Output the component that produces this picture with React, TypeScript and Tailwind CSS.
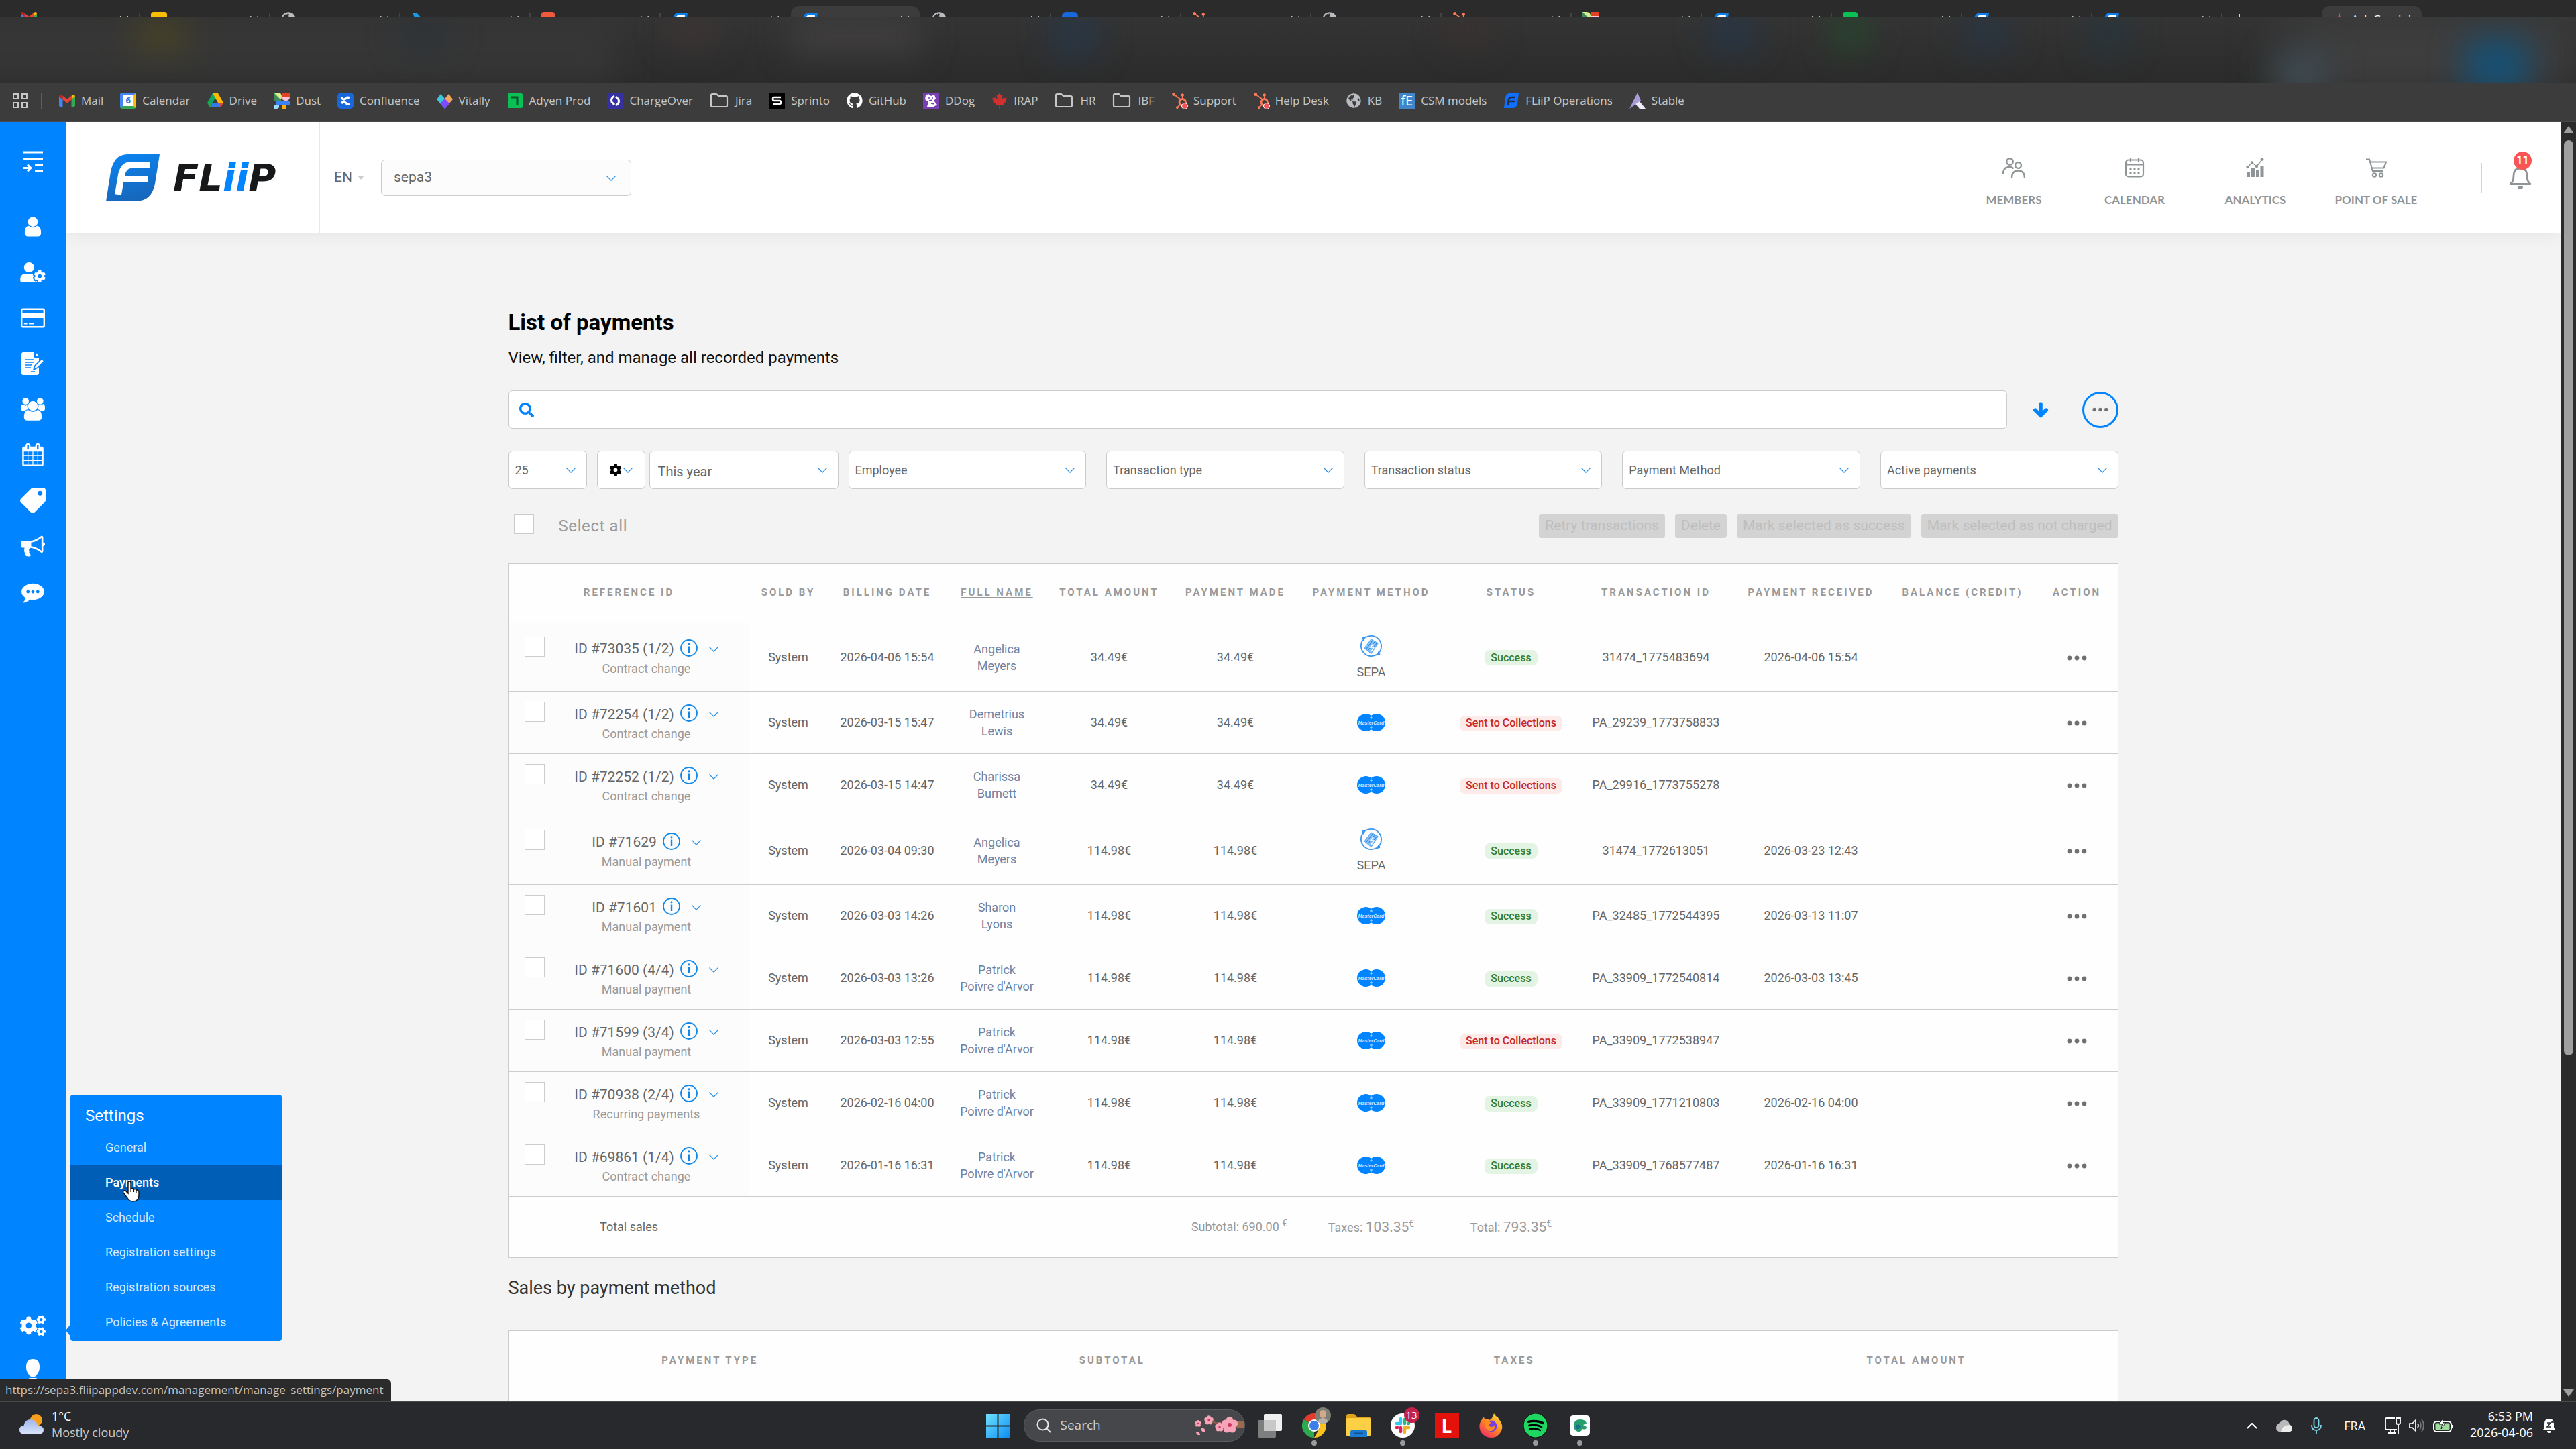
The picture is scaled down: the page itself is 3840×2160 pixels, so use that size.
import type { ReactNode } from "react"
import {
  FaArrowDown,
  FaCanadianMapleLeaf,
  FaCog,
  FaCogs,
  FaGithub,
  FaGlobeAmericas,
  FaHubspot,
  FaSearch,
  FaSpotify,
  FaTag,
  FaUserCog,
} from "react-icons/fa"

interface Payment {
  id: string
  kind: string
  date: string
  name: [string, string]
  amount: string
  method: "sepa" | "mastercard"
  success: boolean
  transaction: string
  received: string
}

const payments: Payment[] = [
  { id: "#73035 (1/2)", kind: "Contract change", date: "2026-04-06 15:54", name: ["Angelica", "Meyers"], amount: "34.49€", method: "sepa", success: true, transaction: "31474_1775483694", received: "2026-04-06 15:54" },
  { id: "#72254 (1/2)", kind: "Contract change", date: "2026-03-15 15:47", name: ["Demetrius", "Lewis"], amount: "34.49€", method: "mastercard", success: false, transaction: "PA_29239_1773758833", received: "" },
  { id: "#72252 (1/2)", kind: "Contract change", date: "2026-03-15 14:47", name: ["Charissa", "Burnett"], amount: "34.49€", method: "mastercard", success: false, transaction: "PA_29916_1773755278", received: "" },
  { id: "#71629", kind: "Manual payment", date: "2026-03-04 09:30", name: ["Angelica", "Meyers"], amount: "114.98€", method: "sepa", success: true, transaction: "31474_1772613051", received: "2026-03-23 12:43" },
  { id: "#71601", kind: "Manual payment", date: "2026-03-03 14:26", name: ["Sharon", "Lyons"], amount: "114.98€", method: "mastercard", success: true, transaction: "PA_32485_1772544395", received: "2026-03-13 11:07" },
  { id: "#71600 (4/4)", kind: "Manual payment", date: "2026-03-03 13:26", name: ["Patrick", "Poivre d'Arvor"], amount: "114.98€", method: "mastercard", success: true, transaction: "PA_33909_1772540814", received: "2026-03-03 13:45" },
  { id: "#71599 (3/4)", kind: "Manual payment", date: "2026-03-03 12:55", name: ["Patrick", "Poivre d'Arvor"], amount: "114.98€", method: "mastercard", success: false, transaction: "PA_33909_1772538947", received: "" },
  { id: "#70938 (2/4)", kind: "Recurring payments", date: "2026-02-16 04:00", name: ["Patrick", "Poivre d'Arvor"], amount: "114.98€", method: "mastercard", success: true, transaction: "PA_33909_1771210803", received: "2026-02-16 04:00" },
  { id: "#69861 (1/4)", kind: "Contract change", date: "2026-01-16 16:31", name: ["Patrick", "Poivre d'Arvor"], amount: "114.98€", method: "mastercard", success: true, transaction: "PA_33909_1768577487", received: "2026-01-16 16:31" },
]

const columns = [
  { label: "Reference ID", width: "w-[358px]" },
  { label: "Sold by", width: "w-[117px]" },
  { label: "Billing date", width: "w-[178px]" },
  { label: "Full name", width: "w-[149px]" },
  { label: "Total amount", width: "w-[186px]" },
  { label: "Payment made", width: "w-[190px]" },
  { label: "Payment method", width: "w-[215px]" },
  { label: "Status", width: "w-[202px]" },
  { label: "Transaction ID", width: "w-[230px]" },
  { label: "Payment received", width: "w-[232px]" },
  { label: "Balance (credit)", width: "w-[220px]" },
  { label: "Action", width: "w-[121px]" },
]

const settingsLinks = ["General", "Payments", "Schedule", "Registration settings", "Registration sources", "Policies & Agreements"]

/* ---------- Icons ---------- */

function FliipMark({ className }: { className?: string }) {
  return (
    <svg className={className} viewBox="0 0 80 70">
      <defs>
        <linearGradient id="mark" x1="0" y1="0" x2="0.3" y2="1">
          <stop offset="0" stopColor="#0a86f5" />
          <stop offset="1" stopColor="#1668bd" />
        </linearGradient>
      </defs>
      <path d="M32 0H80L73 44Q68 70 44 70H0L7 26Q12 0 32 0Z" fill="url(#mark)" />
      <path d="M18 60L23 31Q26 16 38 16H66M22 37H62" fill="none" stroke="#fff" strokeWidth="10" />
    </svg>
  )
}

function Chevron({ className = "" }: { className?: string }) {
  return (
    <svg className={`h-2 w-3.5 text-[#2f93e6] ${className}`} viewBox="0 0 14 8" fill="none" stroke="currentColor" strokeWidth="1.2">
      <path d="M0.5 0.5L7 7.2L13.5 0.5" />
    </svg>
  )
}

function Dots({ className = "h-2 w-[30px]" }: { className?: string }) {
  return (
    <svg className={className} viewBox="0 0 30 8" fill="#707070">
      <circle cx="4" cy="4" r="3.4" />
      <circle cx="15" cy="4" r="3.4" />
      <circle cx="26" cy="4" r="3.4" />
    </svg>
  )
}

function InfoIcon() {
  return (
    <svg className="h-[26px] w-[26px]" viewBox="0 0 26 26" fill="none" stroke="#1088ea" strokeWidth="1.8">
      <circle cx="13" cy="13" r="12" />
      <path d="M13 10.5V20" strokeWidth="2.4" />
      <circle cx="13" cy="6.8" r="1.6" fill="#1088ea" stroke="none" />
    </svg>
  )
}

function SepaIcon() {
  return (
    <svg className="h-[34px] w-[34px]" viewBox="0 0 34 34" fill="none" stroke="#3a96ee" strokeWidth="1.8">
      <path d="M8 4.5A15.5 15.5 0 0 1 29.5 26M26 29.5A15.5 15.5 0 0 1 4.5 8" />
      <path d="M9 3.2L4 4.6L5.4 9.4ZM25 30.8L30 29.4L28.6 24.6Z" fill="#3a96ee" strokeWidth="1" />
      <path d="M7 20L17 7L27 13L17 28Z" fill="#8fc4f7" stroke="#5aa9f2" strokeWidth="1.2" />
      <path d="M10 21L19 9M13 23L22 11M16 25L25 13" stroke="#2b8ae6" strokeWidth="1.2" />
      <path d="M20 14L16 19H21L17 25" stroke="#fff" strokeWidth="1.6" />
    </svg>
  )
}

function MastercardIcon() {
  return (
    <svg className="h-[26px] w-[42px]" viewBox="0 0 42 26">
      <circle cx="13" cy="13" r="13" fill="#0084ff" />
      <circle cx="29" cy="13" r="13" fill="#0084ff" />
      <path d="M21 3.2V8M19 6H23M21 18V22.8M19 20H23" stroke="#bfe0ff" strokeWidth="1" />
      <text x="21" y="16" textAnchor="middle" fontFamily="Liberation Sans" fontWeight="700" fontStyle="italic" fontSize="7" fill="#d9edff">
        MasterCard
      </text>
    </svg>
  )
}

function Fa4({ d, width = 1792, className }: { d: string; width?: number; className: string }) {
  return (
    <svg className={className} viewBox={`0 0 ${width} 1792`} fill="currentColor">
      <path d={d} />
    </svg>
  )
}

const USER =
  "M1536 1399q0 109-62.5 187t-150.5 78h-854q-88 0-150.5-78t-62.5-187q0-85 8.5-160.5t31.5-152 58.5-131 94-89 134.5-34.5q131 128 313 128t313-128q76 0 134.5 34.5t94 89 58.5 131 31.5 152 8.5 160.5zm-256-887q0 159-112.5 271.5t-271.5 112.5-271.5-112.5-112.5-271.5 112.5-271.5 271.5-112.5 271.5 112.5 112.5 271.5z"
const CARD =
  "M1760 128q66 0 113 47t47 113v1216q0 66-47 113t-113 47h-1600q-66 0-113-47t-47-113v-1216q0-66 47-113t113-47h1600zm-1600 128q-13 0-22.5 9.5t-9.5 22.5v224h1664v-224q0-13-9.5-22.5t-22.5-9.5h-1600zm1600 1280q13 0 22.5-9.5t9.5-22.5v-608h-1664v608q0 13 9.5 22.5t22.5 9.5h1600zm-1504-128v-128h256v128h-256zm384 0v-128h384v128h-384z"
const GROUP =
  "M593 896q-162 5-265 128h-134q-82 0-138-40.5t-56-118.5q0-353 124-353 6 0 43.5 21t97.5 42.5 119 21.5q67 0 133-23-5 37-5 66 0 159 81 295zm1071 637q0 120-73 189.5t-194 69.5h-874q-121 0-194-69.5t-73-189.5q0-53 3.5-103.5t14-109 26.5-108.5 43-97.5 62-81 85.5-53.5 111.5-20q10 0 43 21.5t73 48 107 48 135 21.5 135-21.5 107-48 73-48 43-21.5q61 0 111.5 20t85.5 53.5 62 81 43 97.5 26.5 108.5 14 109 3.5 103.5zm-1024-1277q0 106-75 181t-181 75-181-75-75-181 75-181 181-75 181 75 75 181zm704 384q0 159-112.5 271.5t-271.5 112.5-271.5-112.5-112.5-271.5 112.5-271.5 271.5-112.5 271.5 112.5 112.5 271.5zm576 225q0 78-56 118.5t-138 40.5h-134q-103-123-265-128 81-136 81-295 0-29-5-66 66 23 133 23 59 0 119-21.5t97.5-42.5 43.5-21q124 0 124 353zm-128-609q0 106-75 181t-181 75-181-75-75-181 75-181 181-75 181 75 75 181z"
const CALENDAR =
  "M192 1664h288v-288h-288v288zm352 0h320v-288h-320v288zm-352-352h288v-320h-288v320zm352 0h320v-320h-320v320zm-352-384h288v-288h-288v288zm736 736h320v-288h-320v288zm-384-736h320v-288h-320v288zm768 736h288v-288h-288v288zm-384-352h320v-320h-320v320zm-352-864v-288q0-13-9.5-22.5t-22.5-9.5h-64q-13 0-22.5 9.5t-9.5 22.5v288q0 13 9.5 22.5t22.5 9.5h64q13 0 22.5-9.5t9.5-22.5zm736 864h288v-320h-288v320zm-384-384h320v-288h-320v288zm384 0h288v-288h-288v288zm32-480v-288q0-13-9.5-22.5t-22.5-9.5h-64q-13 0-22.5 9.5t-9.5 22.5v288q0 13 9.5 22.5t22.5 9.5h64q13 0 22.5-9.5t9.5-22.5zm384-64v1280q0 52-38 90t-90 38h-1408q-52 0-90-38t-38-90v-1280q0-52 38-90t90-38h128v-96q0-66 47-113t113-47h64q66 0 113 47t47 113v96h384v-96q0-66 47-113t113-47h64q66 0 113 47t47 113v96h128q52 0 90 38t38 90z"
const BULLHORN =
  "M1664 640q53 0 90.5 37.5t37.5 90.5-37.5 90.5-90.5 37.5v384q0 52-38 90t-90 38q-417-347-812-380-58 19-91 66t-31 100.5 40 92.5q-20 33-23 65.5t6 58 33.5 55 48 50 61.5 50.5q-29 58-111.5 83t-168.5 11.5-132-55.5q-7-23-29.5-87.5t-32-94.5-23-89-15-101 3.5-98.5 22-110.5h-122q-66 0-113-47t-47-113v-192q0-66 47-113t113-47h480q435 0 896-384 52 0 90 38t38 90v384zm-128 604v-954q-394 302-768 343v270q377 42 768 341z"
const COMMENT =
  "M640 896q0-53-37.5-90.5t-90.5-37.5-90.5 37.5-37.5 90.5 37.5 90.5 90.5 37.5 90.5-37.5 37.5-90.5zm384 0q0-53-37.5-90.5t-90.5-37.5-90.5 37.5-37.5 90.5 37.5 90.5 90.5 37.5 90.5-37.5 37.5-90.5zm384 0q0-53-37.5-90.5t-90.5-37.5-90.5 37.5-37.5 90.5 37.5 90.5 90.5 37.5 90.5-37.5 37.5-90.5zm384 0q0 174-120 321.5t-326 233-450 85.5q-110 0-211-18-173 173-435 229-52 10-86 13-12 1-22-6t-13-18q-4-15 20-37 5-5 23.5-21.5t25.5-23.5 23.5-25.5 24-31.5 20.5-37 20-48 14.5-57.5 12.5-72.5q-146-90-229.5-216.5t-83.5-269.5q0-174 120-321.5t326-233 450-85.5 450 85.5 326 233 120 321.5z"

function ContractIcon() {
  return (
    <svg className="h-[34px] w-[34px]" viewBox="0 0 34 34">
      <path d="M3 0H19V8H26V31Q26 34 23 34H3Q0 34 0 31V3Q0 0 3 0ZM21 0L26 6H21Z" fill="#fff" />
      <path d="M5 11H19M5 15H18M5 19H16M5 23H14M14 29H20" stroke="#0084ff" strokeWidth="1.6" />
      <path d="M18 26L20 20L30 10L34 13L24 23Z" fill="#fff" stroke="#0084ff" strokeWidth="1.6" />
    </svg>
  )
}

/* ---------- Browser ---------- */

function Globe() {
  return <FaGlobeAmericas className="h-[22px] w-[22px] text-[#b9bcc0]" />
}

function Gmail() {
  return (
    <svg className="h-[18px] w-6" viewBox="0 0 24 18">
      <path d="M0 3V16Q0 18 2 18H5.5V7Z" fill="#4285f4" />
      <path d="M24 3V16Q24 18 22 18H18.5V7Z" fill="#34a853" />
      <path d="M18.5 7L24 3Q23.6 -1.5 19.6 0.9L18.5 1.8Z" fill="#fbbc04" />
      <path d="M5.5 7L0 3Q0.4 -1.5 4.4 0.9L5.5 1.8Z" fill="#c5221f" />
      <path d="M5.5 1.8L12 6.7L18.5 1.8V7.8L12 12.6L5.5 7.8Z" fill="#ea4335" />
    </svg>
  )
}

function Dust() {
  return (
    <svg className="h-6 w-6" viewBox="0 0 24 24">
      <path d="M0 0H6Q12 0 12 6T6 12H0Z" fill="#d3f08c" />
      <path d="M0 0L12 12H0Z" fill="#418b5c" />
      <path d="M12 0H24V6H12Z" fill="#e14322" />
      <path d="M12 6H24Q24 12 18 12T12 6Z" fill="#ffc3df" />
      <path d="M4 12H24V18H4Z" fill="#3b82f6" />
      <path d="M0 18H8V21Q8 24 4 24H0Z" fill="#9fdbff" />
      <path d="M12 18H18V24H12Z" fill="#ffaa0d" />
    </svg>
  )
}

function Folder() {
  return (
    <svg className="h-6 w-[29px]" viewBox="0 0 29 24" fill="none" stroke="#c7c7c7" strokeWidth="2.2" strokeLinejoin="round">
      <path d="M2 19V4Q2 2 4 2H10L13 5H24Q26 5 26 7V19Q26 21 24 21H4Q2 21 2 19Z" />
    </svg>
  )
}

function Hub() {
  return (
    <span className="relative">
      <FaHubspot className="h-6 w-6 text-[#ff7a59]" />
      <span className="absolute -right-px -bottom-px h-2.5 w-2.5 rounded-full border border-white bg-[#f2545b]" />
    </span>
  )
}

const bookmarks: { label: string; icon: ReactNode }[] = [
  { label: "Mail", icon: <Gmail /> },
  {
    label: "Calendar",
    icon: (
      <span className="flex h-6 w-6 items-center justify-center rounded-sm border-4 border-t-[#4285f4] border-r-[#fbbc04] border-b-[#34a853] border-l-[#4285f4] bg-white text-[13px] leading-none font-bold text-[#1a73e8]">
        6
      </span>
    ),
  },
  {
    label: "Drive",
    icon: (
      <svg className="h-[22px] w-6" viewBox="0 0 24 22">
        <path d="M8 0H16L12 7L4 21L0 14Z" fill="#0da960" />
        <path d="M8 0H16L24 14H16Z" fill="#ffba00" />
        <path d="M0 14L4 21L8 14Z" fill="#2ea043" />
        <path d="M8 14H24L20 21H4Z" fill="#2f7bed" />
        <path d="M16 14H24L20 21Z" fill="#ea4335" />
      </svg>
    ),
  },
  { label: "Dust", icon: <Dust /> },
  {
    label: "Confluence",
    icon: (
      <svg className="h-6 w-6" viewBox="0 0 24 24">
        <rect width="24" height="24" rx="5" fill="#1868db" />
        <path d="M6 7Q9 12 12 9T18 8M6 16Q9 12 12 15T18 17" fill="none" stroke="#fff" strokeWidth="3.4" />
      </svg>
    ),
  },
  {
    label: "Vitally",
    icon: (
      <svg className="h-6 w-6" viewBox="0 0 24 24">
        <path d="M6 2L12 9V24L0 10Z" fill="#3cc8d8" />
        <path d="M12 9L18 2L24 10L12 24Z" fill="#f2a55b" />
        <path d="M12 9L5 16L12 24L19 16Z" fill="#7c4dff" />
      </svg>
    ),
  },
  {
    label: "Adyen Prod",
    icon: (
      <svg className="h-[22px] w-[22px]" viewBox="0 0 22 22">
        <rect width="22" height="22" rx="2" fill="#0abf53" />
        <path d="M5 6H14V18" fill="none" stroke="#06532a" strokeWidth="3" />
      </svg>
    ),
  },
  {
    label: "ChargeOver",
    icon: (
      <svg className="h-6 w-6" viewBox="0 0 24 24">
        <rect width="24" height="24" rx="3" fill="#3730a3" />
        <path d="M11 5Q5 8 7 14L11 18M13 6L17 10Q19 16 13 19" fill="none" stroke="#fff" strokeWidth="3" />
      </svg>
    ),
  },
  { label: "Jira", icon: <Folder /> },
  {
    label: "Sprinto",
    icon: (
      <svg className="h-6 w-6" viewBox="0 0 24 24">
        <rect width="24" height="24" fill="#000" />
        <path d="M18 7H8Q6 7 6 9.5T8 12H16Q18 12 18 14.5T16 17H6" fill="none" stroke="#fff" strokeWidth="2.6" />
      </svg>
    ),
  },
  { label: "GitHub", icon: <FaGithub className="h-6 w-6 text-white" /> },
  {
    label: "DDog",
    icon: (
      <svg className="h-6 w-6" viewBox="0 0 24 24">
        <rect width="24" height="24" fill="#7b3fb5" />
        <path d="M4 4L8 2L12 5L17 3L19 9L16 12L21 18L14 22L6 21L8 14L3 10Z" fill="#fff" />
        <path d="M8 8H10M14 8H15M9 12L14 11M12 16L17 17" stroke="#7b3fb5" strokeWidth="1.5" />
      </svg>
    ),
  },
  { label: "IRAP", icon: <FaCanadianMapleLeaf className="h-6 w-6 text-[#d32f2f]" /> },
  { label: "HR", icon: <Folder /> },
  { label: "IBF", icon: <Folder /> },
  { label: "Support", icon: <Hub /> },
  { label: "Help Desk", icon: <Hub /> },
  { label: "KB", icon: <Globe /> },
  {
    label: "CSM models",
    icon: <span className="flex h-6 w-6 items-center justify-center bg-[#3f87c9] text-xl leading-none text-white">fE</span>,
  },
  {
    label: "FLiiP Operations",
    icon: (
      <svg className="h-6 w-6" viewBox="0 0 24 24">
        <path d="M9 1H23L21 16Q20 23 14 23H1L3 8Q4 1 9 1Z" fill="#0f6fff" />
        <path d="M7 19L8 10Q9 7 12 7H18M8 13H17" fill="none" stroke="#1d2b45" strokeWidth="2.6" />
      </svg>
    ),
  },
  {
    label: "Stable",
    icon: (
      <svg className="h-6 w-6" viewBox="0 0 24 24">
        <path d="M12 0L17 12L0 24Z" fill="#a99bd8" />
        <path d="M9 17L15 13L24 24H15Z" fill="#efeafc" />
      </svg>
    ),
  },
]

const tabIcons: ReactNode[] = [
  <Gmail />,
  <span className="flex h-6 w-6 items-center justify-center rounded-sm bg-[#fbbc04]">
    <span className="h-2.5 w-2.5 rounded-full bg-white" />
  </span>,
  <Globe />,
  <svg className="h-6 w-6" viewBox="0 0 24 24">
    <path d="M2 2L8 1L18 12L8 23V14Z" fill="#1a9be8" />
  </svg>,
  <span className="h-[22px] w-5 rounded-sm bg-[#f05a3c]" />,
  <FliipMark className="h-6 w-6" />,
  <FliipMark className="h-6 w-6" />,
  <Globe />,
  <span className="flex h-6 w-6 items-center justify-center rounded-md bg-[#1868db]">
    <span className="h-2.5 w-2 bg-white" />
  </span>,
  <FaHubspot className="h-6 w-6 text-[#ff7a59]" />,
  <Globe />,
  <FaHubspot className="h-6 w-6 text-[#ff7a59]" />,
  <Dust />,
  <FliipMark className="h-6 w-6" />,
  <span className="h-[22px] w-[22px] rounded-sm bg-[#0abf53]" />,
  <FliipMark className="h-6 w-6" />,
  <FliipMark className="h-6 w-6" />,
]

function BrowserChrome() {
  return (
    <header className="shrink-0 bg-[#3c3c3c] font-['Open_Sans',sans-serif] text-[17px] text-[#c7c7c7]">
      <div className="flex h-[25px] overflow-hidden bg-[#2b2b2b] pr-[230px] pl-[15px]">
        {tabIcons.map((icon, i) => (
          <div key={i} className="flex w-[194px] items-start pt-[9px]">
            <div className={`flex h-10 flex-1 items-start justify-between rounded-t-xl px-4 pt-[9px] ${i === 6 ? "bg-[#3c3c3c]" : ""}`}>
              {icon}
              <svg className="mt-1.5 h-3 w-3" viewBox="0 0 12 12" stroke="#bdbdbd" strokeWidth="1.5">
                <path d="M0 0L12 12M12 0L0 12" />
              </svg>
            </div>
            <span className={`mt-2.5 h-6 w-0.5 ${i === 5 || i === 6 ? "bg-transparent" : "bg-[#444]"}`} />
          </div>
        ))}
        <svg className="mt-[21px] ml-[18px] h-3.5 w-3.5" viewBox="0 0 14 14" stroke="#d5d5d5" strokeWidth="2">
          <path d="M7 0V14M0 7H14" />
        </svg>
        <div className="mt-[9px] ml-auto flex h-10 items-start gap-2 rounded-t-xl bg-[#3c3c3c] px-4 pt-[7px] text-white">
          <svg className="mt-0.5 h-5 w-5" viewBox="0 0 20 20">
            <path d="M10 0L14 20H6Z" fill="#e0567a" />
          </svg>
          Ask Gemini
        </div>
      </div>

      {/* Address bar area, obscured */}
      <div className="relative h-[98px] overflow-hidden bg-gradient-to-b from-[#343434] to-[#2b2b2b]">
        <div className="absolute inset-y-0 -left-20 w-[1000px] bg-[#363636] blur-xl" />
        <div className="absolute top-2 left-[200px] h-10 w-20 bg-[#544c1c] opacity-70 blur-xl" />
        <div className="absolute top-2 left-[600px] h-10 w-16 bg-[#2b3338] blur-xl" />
        <div className="absolute top-0 left-[1000px] h-10 w-16 bg-[#403635] blur-xl" />
        <div className="absolute top-0 left-[1180px] h-14 w-48 bg-[#403e3e] blur-xl" />
        <div className="absolute top-0 left-[1570px] h-14 w-16 bg-[#27384a] blur-xl" />
        <div className="absolute top-0 left-[2160px] h-10 w-14 bg-[#3c3230] blur-xl" />
        <div className="absolute top-0 left-[2550px] h-12 w-16 bg-[#25374a] blur-xl" />
        <div className="absolute top-0 left-[2735px] h-12 w-12 bg-[#244a2c] blur-xl" />
        <div className="absolute top-0 left-[2930px] h-12 w-16 bg-[#273645] blur-xl" />
        <div className="absolute top-0 left-[3120px] h-12 w-12 bg-[#243841] blur-xl" />
        <div className="absolute top-0 right-0 h-28 w-[430px] bg-[#404040] blur-2xl" />
        <div className="absolute top-14 right-[370px] h-14 w-20 bg-[#3f4d54] blur-xl" />
        <div className="absolute top-8 right-[70px] h-20 w-24 bg-[#175074] blur-xl" />
      </div>

      <nav className="flex h-[59px] items-center gap-[25px] border-b-2 border-[#4a4848] pb-1 pl-[19px] whitespace-nowrap">
        <div className="flex items-center gap-5">
          <button aria-label="Apps" className="grid grid-cols-2 gap-1">
            <span className="h-[9px] w-[9px] border-2 border-[#c7c7c7]" />
            <span className="h-[9px] w-[9px] border-2 border-[#c7c7c7]" />
            <span className="h-[9px] w-[9px] border-2 border-[#c7c7c7]" />
            <span className="h-[9px] w-[9px] border-2 border-[#c7c7c7]" />
          </button>
          <span className="h-6 w-0.5 bg-[#5e5e5e]" />
        </div>
        {bookmarks.map((b) => (
          <a key={b.label} href="#" className="flex items-center gap-[9px]">
            <span className="flex min-w-6 justify-center">{b.icon}</span>
            {b.label}
          </a>
        ))}
      </nav>
    </header>
  )
}

/* ---------- Application ---------- */

function SideButton({ label, children }: { label: string; children: ReactNode }) {
  return (
    <button aria-label={label} className="flex h-[68px] w-full items-center justify-center">
      {children}
    </button>
  )
}

function Sidebar() {
  return (
    <aside className="flex w-[98px] shrink-0 flex-col bg-[#0084ff] pb-2.5 text-white">
      <button aria-label="Expand menu" className="mb-1 flex h-[118px] items-center justify-center">
        <svg className="h-8 w-[30px]" viewBox="0 0 30 32" fill="none" stroke="#fff" strokeWidth="2.8">
          <path d="M0 2H30M0 11.5H30M18 21H30M18 30H30M0 25.5H11" />
          <path d="M7 20.5L12 25.5L7 30.5" />
        </svg>
      </button>
      <SideButton label="Members">
        <Fa4 d={USER} className="h-[34px] w-[34px]" />
      </SideButton>
      <SideButton label="Employees">
        <FaUserCog className="h-[30px] w-[38px]" />
      </SideButton>
      <SideButton label="Payments">
        <Fa4 d={CARD} width={1920} className="h-[34px] w-9" />
      </SideButton>
      <SideButton label="Contracts">
        <ContractIcon />
      </SideButton>
      <SideButton label="Groups">
        <Fa4 d={GROUP} width={1920} className="h-[34px] w-9" />
      </SideButton>
      <SideButton label="Calendar">
        <Fa4 d={CALENDAR} className="h-[34px] w-[34px]" />
      </SideButton>
      <SideButton label="Products">
        <FaTag className="h-[38px] w-[38px] -scale-x-100" />
      </SideButton>
      <SideButton label="Marketing">
        <Fa4 d={BULLHORN} className="h-9 w-9" />
      </SideButton>
      <SideButton label="Messages">
        <Fa4 d={COMMENT} className="h-[34px] w-[34px]" />
      </SideButton>

      <div className="relative mt-auto">
        <SideButton label="Settings">
          <FaCogs className="h-[34px] w-[38px]" />
        </SideButton>
        <div className="absolute bottom-[11px] left-[105px] z-10 w-[315px] rounded bg-[#0084ff] pb-0.5">
          <svg className="absolute bottom-1.5 -left-[7px] h-5 w-2" viewBox="0 0 8 20" fill="#0084ff">
            <path d="M8 0V20L0 10Z" />
          </svg>
          <h2 className="flex h-[53px] items-center pt-2 pl-[22px] text-2xl">Settings</h2>
          {settingsLinks.map((link) => (
            <a
              key={link}
              href="#"
              className={`flex h-[52px] items-center pl-[52px] text-lg ${
                link === "Payments" ? "bg-[#005eb6] font-medium" : "text-[#d6ebff]"
              }`}
            >
              {link}
            </a>
          ))}
          <svg className="absolute top-[128px] left-[77px] h-8 w-[26px]" viewBox="0 0 26 32">
            <path
              d="M9 3Q9 1 11 1T13 3V12L14.5 11.5Q17 11 17.5 13Q20.5 12 21 14Q25 13.5 25 17V22Q25 31 16 31Q11 31 8 26L2 18Q1 16 3 15T7 17L9 19Z"
              fill="#fff"
              stroke="#111"
              strokeWidth="1.4"
            />
            <path d="M13 12V17M17.5 13V17M21 14V18" stroke="#111" strokeWidth="1.2" />
          </svg>
        </div>
      </div>
      <SideButton label="Profile">
        <svg className="h-9 w-8" viewBox="0 0 32 36" fill="#fff">
          <path d="M16 0Q26 0 26 12Q26 18 22 23Q19 27 16 27T10 23Q6 18 6 12Q6 0 16 0Z" />
          <path d="M11 28H21L32 36H0Z" />
        </svg>
      </SideButton>
    </aside>
  )
}

const navIcon = "h-[30px] w-[34px]"

const navLinks: { label: string; icon: ReactNode }[] = [
  {
    label: "Members",
    icon: (
      <svg className={navIcon} viewBox="0 0 34 30" fill="none" stroke="currentColor" strokeWidth="2.4">
        <circle cx="11" cy="6" r="4.8" />
        <circle cx="23.5" cy="11.5" r="4.4" />
        <path d="M1 24Q1 14 11 14Q14.5 14 16.5 16.5M14 30Q14 19.5 23.5 19.5T33 30" />
      </svg>
    ),
  },
  {
    label: "Calendar",
    icon: (
      <svg className={navIcon} viewBox="0 0 34 30" fill="none" stroke="currentColor" strokeWidth="2.2">
        <rect x="4" y="3.5" width="26" height="25" rx="4" />
        <path d="M4 10.5H30M11 0V6M23 0V6" />
        <path d="M9.5 16.500H12.5M15.5 16.500H18.5M21.5 16.500H24.5M9.5 22.500H12.5M15.5 22.500H18.5M21.5 22.500H24.5" strokeWidth="3" />
      </svg>
    ),
  },
  {
    label: "Analytics",
    icon: (
      <svg className={navIcon} viewBox="0 0 34 30" fill="none" stroke="currentColor" strokeWidth="1.5">
        <path d="M5.5 14L12 7.5L19 13L27 3" />
        <path d="M6.5 29V21M13.5 29V16M20.5 29V19M27 29V12" strokeWidth="5" />
        <g fill="currentColor" stroke="none">
          <circle cx="5.5" cy="14" r="2.2" />
          <circle cx="12" cy="7.5" r="2.2" />
          <circle cx="19" cy="13" r="2.2" />
          <circle cx="27" cy="2.5" r="2.4" />
        </g>
      </svg>
    ),
  },
  {
    label: "Point of sale",
    icon: (
      <svg className={navIcon} viewBox="0 0 34 30" fill="none" stroke="currentColor" strokeWidth="2.2">
        <path d="M2 2.5H7L12 20H27M8.5 6.5H32L28.5 15.5H11" />
        <circle cx="14.5" cy="26" r="2.6" />
        <circle cx="24.5" cy="26" r="2.6" />
      </svg>
    ),
  },
]

function TopBar() {
  return (
    <div className="relative z-[1] flex h-[165px] shrink-0 bg-white shadow-[0_4px_24px_rgba(0,0,0,0.06)]">
      <a href="#" aria-label="FLiiP" className="flex w-[379px] items-center gap-5 border-r border-[#e8e8e8] pl-[60px]">
        <FliipMark className="h-[70px] w-20" />
        <span className="font-['DejaVu_Sans',sans-serif] text-[56px] leading-none font-bold text-[#16181a] italic">
          FL<span className="text-[#0084ff]">ii</span>P
        </span>
      </a>
      <div className="flex items-center">
        <button className="flex w-[91px] items-center gap-2 pl-[21px] text-[21px] text-[#5f6569]">
          EN
          <svg className="h-1.5 w-2.5" viewBox="0 0 10 6" fill="#ccc">
            <path d="M0 0H10L5 6Z" />
          </svg>
        </button>
        <div className="relative">
          <select aria-label="Location" className="h-[54px] w-[373px] appearance-none rounded-md border border-[#ccc] bg-[#fcfcfc] px-[18px] text-[21px] text-[#666]">
            <option>sepa3</option>
          </select>
          <Chevron className="pointer-events-none absolute top-6 right-[23px]" />
        </div>
      </div>
      <nav className="ml-auto flex pt-[53px] font-['Lato',sans-serif] text-[17px] leading-5 font-bold text-[#8f9496]">
        {navLinks.map((link) => (
          <a key={link.label} href="#" className="flex w-[180px] flex-col items-center gap-[23px] uppercase">
            {link.icon}
            {link.label}
          </a>
        ))}
      </nav>
      <div className="ml-[67px] flex items-center gap-10 pr-[43px]">
        <span className="h-11 w-px bg-[#d4d4d4]" />
        <button aria-label="Notifications" className="relative">
          <svg className="h-[34px] w-[34px]" viewBox="0 0 34 34" fill="none" stroke="#8f9496" strokeWidth="2.8">
            <path d="M2 26.5Q7 23 7 14Q7 3 17 3T27 14Q27 23 32 26.500Z" strokeLinejoin="round" />
            <path d="M13 30H21Q21 34 17 34T13 30Z" fill="#8f9496" stroke="none" />
          </svg>
          <span className="absolute -top-[22px] left-[7px] flex h-[27px] w-[27px] items-center justify-center rounded-full bg-[#fa5456] text-base leading-none font-bold text-white">
            11
          </span>
        </button>
      </div>
    </div>
  )
}

function Filter({ label, text, className = "" }: { label: string; text?: string; className?: string }) {
  return (
    <div className={`relative ${className}`}>
      <select
        aria-label={label}
        className={`h-[57px] w-full appearance-none rounded-md border border-[#ccc] bg-white text-[#666] ${text ?? "px-[9px] text-lg"}`}
      >
        <option>{label}</option>
      </select>
      <Chevron className="pointer-events-none absolute top-[25px] right-[17px]" />
    </div>
  )
}

function Checkbox({ id, label }: { id: string; label?: string }) {
  return <input id={id} type="checkbox" aria-label={label} className="h-[30px] w-[30px] shrink-0 appearance-none border border-[#ccc] bg-white" />
}

function HeadCell({ children }: { children: string }) {
  return (
    <th className="border-b border-[#ccc] p-0 text-[15px] font-bold tracking-[3px] whitespace-nowrap text-[#999] uppercase">
      {children === "Full name" ? <span className="underline underline-offset-2">{children}</span> : children}
    </th>
  )
}

function PaymentRow({ payment }: { payment: Payment }) {
  const checkId = `pay-${payment.id.slice(1, 6)}`
  return (
    <tr className={payment.method === "sepa" ? "h-[102px]" : "h-[93px]"}>
      <td className="border-r border-b border-[#ccc] bg-[#fcfcfc] p-0">
        <div className="flex items-start pb-1 pl-[23px]">
          <Checkbox id={checkId} label={`Select payment ${payment.id}`} />
          <div className="flex-1 text-center">
            <div className="flex h-[38px] items-center justify-center gap-[9px] text-[21px] text-[#666]">
              <label htmlFor={checkId}>ID {payment.id}</label>
              <span className="pb-1">
                <InfoIcon />
              </span>
              <Chevron className="ml-2" />
            </div>
            <div className="text-lg leading-5 text-[#999]">{payment.kind}</div>
          </div>
        </div>
      </td>
      <td className="border-b border-[#ccc] p-0">System</td>
      <td className="border-b border-[#ccc] p-0">{payment.date}</td>
      <td className="border-b border-[#ccc] p-0 leading-[25px]">
        <a href="#" className="text-[#6d82a3]">
          {payment.name[0]}
          <br />
          {payment.name[1]}
        </a>
      </td>
      <td className="border-b border-[#ccc] p-0">{payment.amount}</td>
      <td className="border-b border-[#ccc] p-0">{payment.amount}</td>
      <td className="border-b border-[#ccc] p-0">
        <div className="flex flex-col items-center gap-2.5 leading-6">
          {payment.method === "sepa" ? (
            <>
              <SepaIcon />
              SEPA
            </>
          ) : (
            <MastercardIcon />
          )}
        </div>
      </td>
      <td className="border-b border-[#ccc] p-0">
        <span
          className={`inline-flex h-[23px] items-center rounded-lg px-[9px] text-base font-medium ${
            payment.success ? "bg-[#e4f4e4] text-[#2e7d32]" : "bg-[#fdebea] text-[#c62828]"
          }`}
        >
          {payment.success ? "Success" : "Sent to Collections"}
        </span>
      </td>
      <td className="border-b border-[#ccc] p-0">{payment.transaction}</td>
      <td className="border-b border-[#ccc] p-0">{payment.received}</td>
      <td className="border-b border-[#ccc] p-0" />
      <td className="border-b border-[#ccc] p-0">
        <button aria-label="Actions" className="align-middle">
          <Dots />
        </button>
      </td>
    </tr>
  )
}

function PaymentsPage() {
  return (
    <main className="mx-auto w-full max-w-[2400px] pt-[110px]">
      <h1 className="text-[33px] leading-[48px] font-bold text-black">List of payments</h1>
      <p className="mt-2.5 text-2xl leading-9 text-[#111]">View, filter, and manage all recorded payments</p>

      <div className="mt-[31px] flex items-center">
        <label className="flex h-[57px] flex-1 items-center rounded-md border border-[#ccc] bg-white pl-[15px]">
          <FaSearch className="h-[22px] w-[22px] text-[#0084ff]" />
          <input type="search" aria-label="Search payments" className="h-full flex-1 bg-transparent px-3 text-xl outline-none" />
        </label>
        <button aria-label="Download" className="ml-[38px]">
          <FaArrowDown className="h-6 w-6 text-[#0084ff]" strokeWidth="40" stroke="currentColor" />
        </button>
        <button aria-label="More" className="ml-[50px] flex h-[54px] w-[54px] items-center justify-center rounded-full border-3 border-[#0084ff]">
          <Dots className="h-[7px] w-6" />
        </button>
      </div>

      <div className="mt-[33px] flex">
        <Filter label="25" className="w-[117px]" />
        <button aria-label="Columns" className="ml-[15px] flex h-[57px] w-[72px] items-center justify-center gap-0.5 rounded-md border border-[#ccc] bg-white">
          <FaCog className="h-[19px] w-[19px] text-black" />
          <Chevron />
        </button>
        <Filter label="This year" text="px-3 pt-1 text-xl" className="ml-1.5 w-[282px]" />
        <div className="ml-[15px] grid flex-1 grid-cols-5 gap-[30px]">
          <Filter label="Employee" />
          <Filter label="Transaction type" />
          <Filter label="Transaction status" />
          <Filter label="Payment Method" />
          <Filter label="Active payments" />
        </div>
      </div>

      <div className="mt-[37px] flex h-9 items-start pl-2">
        <Checkbox id="select-all" />
        <label htmlFor="select-all" className="ml-[37px] text-2xl leading-9 tracking-wide text-[#999]">
          Select all
        </label>
        <div className="ml-auto flex gap-[15px] text-[21px] text-[#bebebe]">
          {["Retry transactions", "Delete", "Mark selected as success", "Mark selected as not charged"].map((action) => (
            <button key={action} disabled className="h-9 rounded bg-[#d3d3d3] px-[9px]">
              {action}
            </button>
          ))}
        </div>
      </div>

      <table className="mt-[37px] w-full table-fixed border-separate border-spacing-0 border border-b-0 border-[#ccc] bg-[#fefefe] text-center text-lg text-[#666]">
        <colgroup>
          {columns.map((c) => (
            <col key={c.label} className={c.width} />
          ))}
        </colgroup>
        <thead>
          <tr className="h-[89px]">
            {columns.map((c) => (
              <HeadCell key={c.label}>{c.label}</HeadCell>
            ))}
          </tr>
        </thead>
        <tbody>
          {payments.map((p) => (
            <PaymentRow key={p.id} payment={p} />
          ))}
        </tbody>
        <tfoot>
          <tr className="h-[91px] whitespace-nowrap text-[#999]">
            <td className="border-b border-[#ccc] p-0 text-[#666]">Total sales</td>
            <td colSpan={4} className="border-b border-[#ccc] p-0" />
            <td className="border-b border-[#ccc] p-0 pl-3">
              Subtotal: 690.00 <sup className="text-sm">€</sup>
            </td>
            <td className="border-b border-[#ccc] p-0">
              Taxes: <span className="text-[21px]">103.35</span>
              <sup className="text-sm">€</sup>
            </td>
            <td className="border-b border-[#ccc] p-0">
              Total: <span className="text-[21px]">793.35</span>
              <sup className="text-sm">€</sup>
            </td>
            <td colSpan={4} className="border-b border-[#ccc] p-0" />
          </tr>
        </tfoot>
      </table>

      <h2 className="mt-[27px] text-[27px] leading-9 text-[#333]">Sales by payment method</h2>
      <table className="mt-[45px] w-full table-fixed border-separate border-spacing-0 border border-[#ccc] bg-[#fefefe]">
        <thead>
          <tr className="h-[90px]">
            <HeadCell>Payment type</HeadCell>
            <HeadCell>Subtotal</HeadCell>
            <HeadCell>Taxes</HeadCell>
            <HeadCell>Total amount</HeadCell>
          </tr>
        </thead>
        <tbody>
          <tr className="h-[90px]">
            <td colSpan={4} />
          </tr>
        </tbody>
      </table>
    </main>
  )
}

/* ---------- Taskbar ---------- */

function TaskIcon({ running, children }: { running?: boolean; children: ReactNode }) {
  return (
    <button className="relative flex h-full w-[66px] items-center justify-center">
      {children}
      {running && <span className="absolute bottom-[5px] left-[29px] h-2 w-2 rounded-full bg-[#9a9a9a]" />}
    </button>
  )
}

function Flower({ x, y, s }: { x: number; y: number; s: number }) {
  return (
    <g transform={`translate(${x} ${y}) scale(${s})`} fill="#f7a3b8">
      <circle cy="-5" r="4" />
      <circle cx="5" cy="-1.5" r="4" />
      <circle cx="3" cy="4.5" r="4" />
      <circle cx="-3" cy="4.5" r="4" />
      <circle cx="-5" cy="-1.5" r="4" />
      <circle r="2.2" fill="#c8385f" />
    </g>
  )
}

function Taskbar() {
  return (
    <footer className="grid h-[72px] shrink-0 grid-cols-[1fr_auto_1fr] items-center border-t-2 border-[#48484a] bg-[#28292c] font-['Open_Sans',sans-serif] text-lg text-white">
      <button className="flex items-center gap-3 pb-1 pl-[29px] text-left leading-6">
        <svg className="h-9 w-9" viewBox="0 0 36 36">
          <defs>
            <linearGradient id="cloud" x1="0" y1="0" x2="0" y2="1">
              <stop offset="0" stopColor="#9fb6ea" />
              <stop offset="1" stopColor="#dbe6fb" />
            </linearGradient>
          </defs>
          <circle cx="25" cy="12" r="9" fill="#f8a01c" />
          <path d="M8 33Q0 33 0 26.5Q0 20 6.5 20Q8 11 16.5 11T27 20Q36 20 36 26.5T28 33Z" fill="url(#cloud)" />
        </svg>
        <span>
          <span className="block">1°C</span>
          <span className="block text-[#c9c9ca]">Mostly cloudy</span>
        </span>
      </button>

      <div className="flex h-[70px] items-center pl-[17px]">
        <button aria-label="Start" className="mr-[21px]">
          <svg className="h-[35px] w-[35px]" viewBox="0 0 35 35">
            <defs>
              <linearGradient id="win" x1="0" y1="0" x2="1" y2="1">
                <stop offset="0" stopColor="#6fe3fd" />
                <stop offset="1" stopColor="#0d8cf2" />
              </linearGradient>
            </defs>
            <path d="M0 0H16.5V16.5H0ZM18.5 0H35V16.5H18.5ZM0 18.5H16.5V35H0ZM18.5 18.5H35V35H18.5Z" fill="url(#win)" />
          </svg>
        </button>
        <label className="flex h-12 w-[330px] items-center overflow-hidden rounded-full border border-[#5a5b5e] bg-[#46474a] pl-[18px]">
          <svg className="h-[22px] w-[22px] shrink-0" viewBox="0 0 22 22" fill="none" stroke="#e6e6e6" strokeWidth="2">
            <circle cx="9.5" cy="9.5" r="8" />
            <path d="M15 15L21 21" />
          </svg>
          <input type="text" aria-label="Search" placeholder="Search" className="w-40 flex-1 bg-transparent px-3.5 text-[19px] placeholder-[#d0d0d0] outline-none" />
          <svg className="h-8 w-[76px] shrink-0" viewBox="0 0 76 32">
            <path d="M72 14Q50 14 40 14L24 9M52 15L40 20" fill="none" stroke="#8a5a44" strokeWidth="2.4" />
            <path d="M64 10H76V20H64Z" fill="#9a6a50" />
            <Flower x={23} y={8} s={0.75} />
            <Flower x={54} y={15} s={1.35} />
            <Flower x={39} y={18} s={0.75} />
            <Flower x={7} y={13} s={0.55} />
            <path d="M11 21Q17 17 18 26Q12 26 11 21ZM4 26Q9 23 10 30Q5 31 4 26Z" fill="#f7a3b8" />
          </svg>
        </label>
        <span className="w-1" />
        <TaskIcon>
          <svg className="h-[35px] w-9" viewBox="0 0 36 35">
            <rect x="9" width="27" height="25" rx="2" fill="#efefef" />
            <rect y="9" width="27" height="26" rx="2" fill="#8d8d8d" fillOpacity="0.85" />
            <rect x="9" y="9" width="18" height="16" fill="#c8c8c8" />
          </svg>
        </TaskIcon>
        <TaskIcon running>
          <svg className="h-9 w-9" viewBox="0 0 36 36">
            <path d="M18 18L2.4 9A18 18 0 0 1 33.6 9Z" fill="#e33b2e" />
            <path d="M18 18L18 36A18 18 0 0 1 2.4 9Z" fill="#2da94f" />
            <path d="M18 9H33.6A18 18 0 0 1 18 36L25.8 22.5Z" fill="#fcc31e" />
            <circle cx="18" cy="18" r="9" fill="#fff" />
            <circle cx="18" cy="18" r="7" fill="#3f7ee8" />
          </svg>
          <span className="absolute top-2 right-2 h-6 w-6 overflow-hidden rounded-full bg-[#7d7f74]">
            <span className="mx-auto mt-1 block h-3 w-2.5 rounded-full bg-[#d3a78c]" />
            <span className="mx-auto block h-3 w-4 rounded-t-full bg-[#b9b2ac]" />
          </span>
        </TaskIcon>
        <TaskIcon>
          <svg className="h-[34px] w-9" viewBox="0 0 36 34">
            <path d="M0 3Q0 0 3 0H12L16 4H33Q36 4 36 7V16H0Z" fill="#e0a21a" />
            <rect y="6" width="36" height="27" rx="2" fill="#fccf45" />
            <path d="M6 34V27Q6 23 10 23H27Q31 23 31 27V34Z" fill="#1a7bd0" />
            <path d="M12 28.5H25" stroke="#0f4f94" strokeWidth="2" />
          </svg>
        </TaskIcon>
        <TaskIcon running>
          <svg className="h-9 w-9" viewBox="0 0 36 36" strokeWidth="4.5" strokeLinecap="round">
            <circle cx="18" cy="18" r="18" fill="#fff" />
            <path d="M15 8V14M9 15H15" stroke="#36c5f0" />
            <path d="M21 9V15M27 15H26" stroke="#2eb67d" />
            <path d="M21 28V21M21 21H27" stroke="#ecb22e" />
            <path d="M9 21H10M15 21V27" stroke="#e01e5a" />
          </svg>
          <span className="absolute top-2 right-2 flex h-[23px] w-[23px] items-center justify-center rounded-full bg-[#c4204c] text-[15px] leading-none">13</span>
        </TaskIcon>
        <TaskIcon>
          <span className="flex h-9 w-9 items-center justify-center bg-[#e3120b] text-[28px] leading-none font-bold">L</span>
        </TaskIcon>
        <TaskIcon>
          <svg className="h-9 w-9" viewBox="0 0 36 36">
            <defs>
              <linearGradient id="fox" x1="0.9" y1="0" x2="0.2" y2="1">
                <stop offset="0" stopColor="#ffe14a" />
                <stop offset="0.5" stopColor="#ff8a1e" />
                <stop offset="1" stopColor="#f2286a" />
              </linearGradient>
            </defs>
            <path d="M22 0Q25 5 28 6Q29 9 32 12Q36 19 33 26Q28 36 18 36T2 27Q-2 17 4 9L6 5L9 9Q13 8 15 10Q20 8 22 0Z" fill="url(#fox)" />
            <circle cx="18" cy="19" r="8.5" fill="#7a3fe0" />
            <path d="M8 13Q14 10 18 14Q14 15 14 18Q18 22 24 18Q22 28 14 26Q8 23 8 13Z" fill="#ff8a1e" />
          </svg>
        </TaskIcon>
        <TaskIcon running>
          <span className="rounded-full bg-black">
            <FaSpotify className="h-9 w-9 text-[#1ed760]" />
          </span>
        </TaskIcon>
        <TaskIcon running>
          <svg className="h-[30px] w-[30px]" viewBox="0 0 30 30">
            <rect width="30" height="30" rx="5" fill="#fff" />
            <path d="M6 15Q6 6 16 6Q24 6 25 12L20 14L25 17Q25 22 19 20Q17 25 12 24Q6 22 6 15Z" fill="#25a06d" />
            <path d="M10 14Q14 12 17 17Q14 21 10 20Z" fill="#1c6f8f" />
          </svg>
        </TaskIcon>
      </div>

      <div className="flex items-center justify-end pr-[30px]">
        <svg className="h-[9px] w-4" viewBox="0 0 16 9" fill="none" stroke="#fff" strokeWidth="2">
          <path d="M1 8L8 1L15 8" />
        </svg>
        <svg className="ml-7 h-[18px] w-6" viewBox="0 0 24 18">
          <path d="M6 18Q0 18 0 12Q0 7 5 6Q8 0 14 1Q19 2 20 8Q24 9 24 13Q24 18 19 18Z" fill="#b9b9b9" />
          <path d="M7 18Q9 8 20 8Q24 9 24 13Q24 18 19 18Z" fill="#ececec" />
        </svg>
        <svg className="ml-7 h-6 w-4" viewBox="0 0 16 24" fill="none" stroke="#7fd6e4" strokeWidth="1.8">
          <rect x="4.5" y="1" width="7" height="14" rx="3.5" />
          <path d="M1 11Q1 19 8 19T15 11M8 19V24" />
        </svg>
        <span className="ml-[33px]">FRA</span>
        <svg className="ml-[29px] h-6 w-6" viewBox="0 0 24 24" fill="none" stroke="#fff" strokeWidth="1.8">
          <path d="M15 1H3Q1 1 1 3V16Q1 18 3 18H18M8 18V23M14 18V23M5 23H17" />
          <path d="M17 1H23V8Q23 10 20 10T17 8ZM20 10V24" />
        </svg>
        <svg className="ml-3 h-[22px] w-6" viewBox="0 0 24 22" fill="none" stroke="#fff" strokeWidth="1.7">
          <path d="M1 8H5L10 3V19L5 14H1Z" />
          <path d="M13 8Q15 11 13 14" />
          <path d="M16 5Q20 11 16 17M19 2Q25 11 19 20" stroke="#77787b" />
        </svg>
        <svg className="ml-3 h-[22px] w-[30px]" viewBox="0 0 30 22">
          <rect x="1" y="5" width="26" height="15" rx="4.5" fill="none" stroke="#fff" strokeWidth="2" />
          <rect x="3.5" y="7.5" width="21" height="10" rx="2" fill="#9fdc9b" />
          <path d="M29 10V15" stroke="#fff" strokeWidth="2" />
          <path d="M15 0L9 9H13.5L12 16L18.5 7H14.5Z" fill="#fff" stroke="#28292c" />
        </svg>
        <span className="ml-[25px] pb-1 text-right leading-6">
          <span className="block">6:53 PM</span>
          <span className="block">2026-04-06</span>
        </span>
        <svg className="ml-3.5 h-6 w-5" viewBox="0 0 20 24">
          <path d="M1 18L3 15V9Q3 2 10 2T17 9V15L19 18ZM7 20H13Q13 23 10 23T7 20Z" fill="#fff" />
          <path d="M7 8H12L7 14H12M14 1H19L14 7H19" fill="none" stroke="#28292c" strokeWidth="1.6" />
        </svg>
      </div>
    </footer>
  )
}

export default function App() {
  return (
    <div className="flex h-screen flex-col overflow-hidden bg-[#f3f3f3] font-['Roboto',sans-serif]">
      <BrowserChrome />
      <div className="relative flex min-h-0 flex-1 overflow-hidden">
        <Sidebar />
        <div className="flex min-w-0 flex-1 flex-col overflow-hidden">
          <TopBar />
          <PaymentsPage />
        </div>
        {/* Scrollbar */}
        <div className="flex w-[23px] shrink-0 flex-col items-center bg-[#2b2b2b] py-1.5">
          <svg className="h-[11px] w-4" viewBox="0 0 16 11" fill="#9f9f9f">
            <path d="M8 0L16 11H0Z" />
          </svg>
          <div className="mt-2.5 h-[72%] w-3.5 rounded-full bg-[#9f9f9f]" />
          <svg className="mt-auto h-[11px] w-4" viewBox="0 0 16 11" fill="#9f9f9f">
            <path d="M0 0H16L8 11Z" />
          </svg>
        </div>
        {/* Link preview */}
        <div className="absolute bottom-0 left-0 z-20 h-8 rounded-tr-md bg-[#2b2b2b] px-2 pr-3 font-['Open_Sans',sans-serif] text-[17px] leading-8 text-[#c4c4c4]">
          https://sepa3.fliipappdev.com/management/manage_settings/payment
        </div>
      </div>
      <Taskbar />
    </div>
  )
}
